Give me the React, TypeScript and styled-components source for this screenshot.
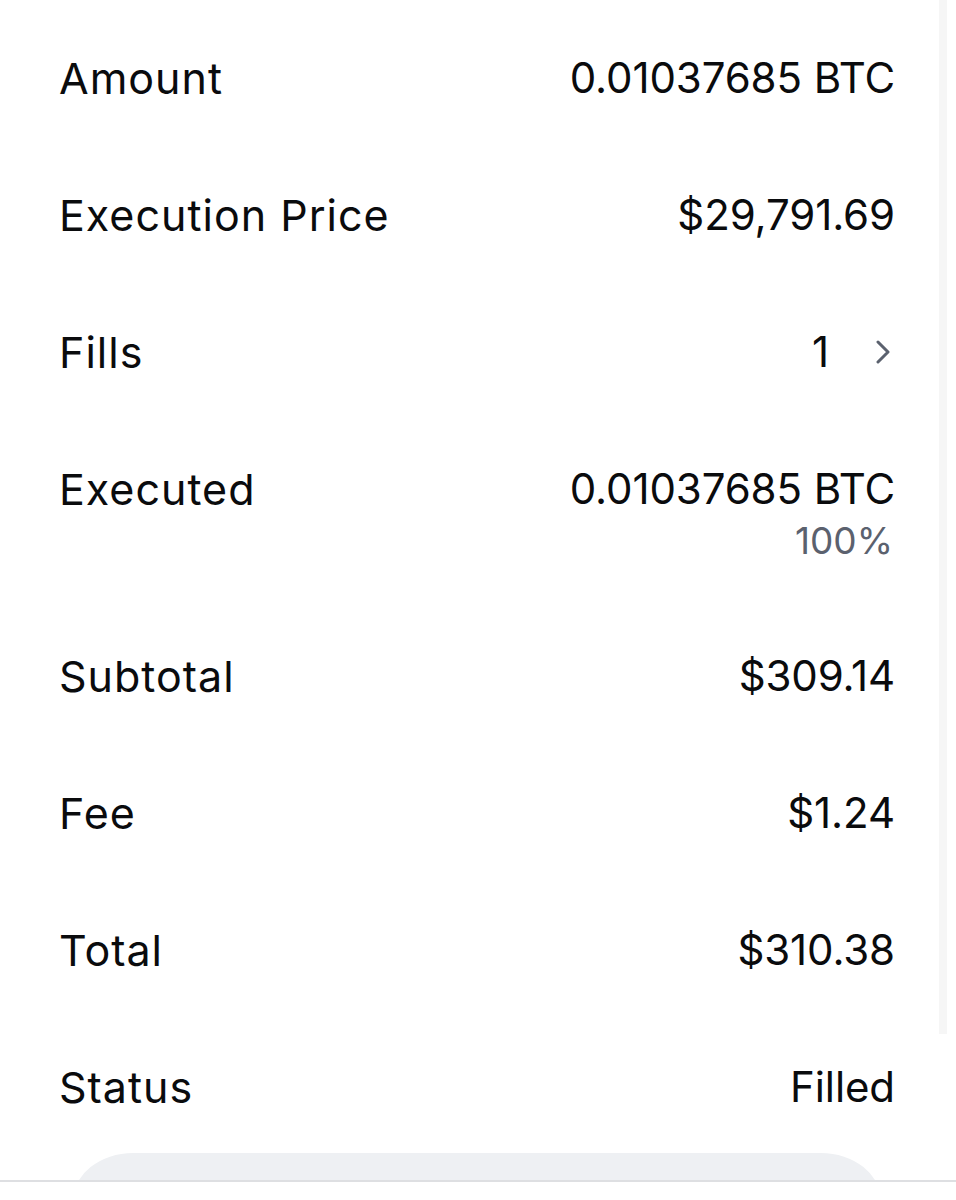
import React from "react";
import styled, { createGlobalStyle } from "styled-components";

const Global = createGlobalStyle`
  html, body {
    margin: 0;
    padding: 0;
    background: #ffffff;
  }
  body {
    font-family: Inter, "Liberation Sans", sans-serif;
    color: #0a0b0d;
  }
`;

const Page = styled.div`
  position: relative;
  width: 956px;
  height: 1200px;
  overflow: hidden;
  background: #fff;
`;

const List = styled.div`
  display: flex;
  flex-direction: column;
  padding: 10px 61px 0 59px;
`;

const Row = styled.div`
  display: flex;
  justify-content: space-between;
  align-items: flex-start;
  padding: 43px 0 44px;
`;

const Label = styled.div`
  font-size: 43px;
  line-height: 50px;
  font-weight: 400;
  letter-spacing: 1px;
`;

const ValueCol = styled.div`
  display: flex;
  flex-direction: column;
  align-items: flex-end;
`;

const Value = styled.div`
  display: flex;
  align-items: center;
  font-size: 42px;
  line-height: 50px;
  font-weight: 400;
  letter-spacing: -0.1px;
`;

const Sub = styled.div`
  font-size: 37px;
  line-height: 47px;
  color: #5b616e;
  margin-top: 3px;
  margin-right: 2px;
`;

const Chevron = styled.svg`
  width: 24px;
  height: 24px;
  margin-left: 42px;
`;

const Scrollbar = styled.div`
  position: absolute;
  top: 0;
  left: 939px;
  width: 8px;
  height: 1034px;
  background: #f6f6f6;
`;

const Footer = styled.div`
  position: absolute;
  left: 0;
  right: 0;
  bottom: 0;
  height: 47px;
  display: flex;
  flex-direction: column;
  align-items: center;
  overflow: hidden;
`;

const SheetClip = styled.div`
  width: 100%;
  height: 27px;
  display: flex;
  justify-content: center;
  overflow: hidden;
`;

const Sheet = styled.div`
  flex: none;
  width: 808px;
  height: 120px;
  margin-left: -2px;
  background: #eef0f3;
  border-radius: 60px / 48px;
`;

const Divider = styled.div`
  width: 100%;
  height: 2px;
  background: #dedfe2;
`;

const Blank = styled.div`
  width: 100%;
  flex: 1;
  background: #fff;
`;

const rows = [
  { label: "Amount", value: "0.01037685 BTC" },
  { label: "Execution Price", value: "$29,791.69" },
  { label: "Fills", value: "1", chevron: true },
  { label: "Executed", value: "0.01037685 BTC", sub: "100%" },
  { label: "Subtotal", value: "$309.14" },
  { label: "Fee", value: "$1.24" },
  { label: "Total", value: "$310.38" },
  { label: "Status", value: "Filled" },
];

export default function App() {
  return (
    <Page>
      <Global />
      <List>
        {rows.map((r) => (
          <Row key={r.label}>
            <Label>{r.label}</Label>
            <ValueCol>
              <Value>
                {r.value}
                {r.chevron && (
                  <Chevron viewBox="0 0 24 24" fill="none">
                    <path
                      d="M7 2 L17 12 L7 22"
                      stroke="#5b616e"
                      strokeWidth="3"
                      strokeLinecap="round"
                      strokeLinejoin="round"
                    />
                  </Chevron>
                )}
              </Value>
              {r.sub && <Sub>{r.sub}</Sub>}
            </ValueCol>
          </Row>
        ))}
      </List>
      <Scrollbar />
      <Footer>
        <SheetClip>
          <Sheet />
        </SheetClip>
        <Divider />
        <Blank />
      </Footer>
    </Page>
  );
}
